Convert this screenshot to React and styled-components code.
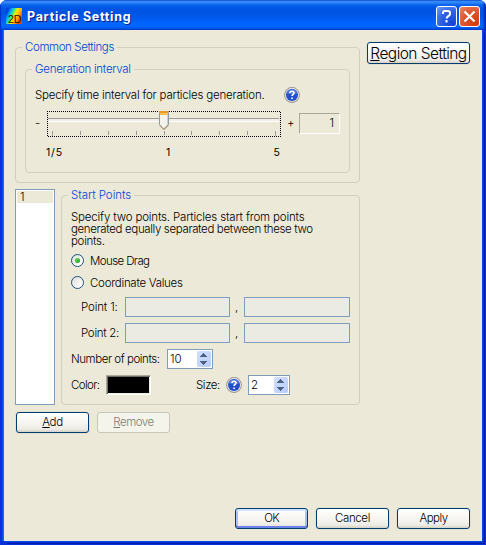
import React from 'react';
import styled, { createGlobalStyle, css } from 'styled-components';

const face = '#ece9d8';
const groove = '#d0d0bf';
const fieldBorder = '#7f9db9';

const GlobalStyle = createGlobalStyle`
  *, *::before, *::after { box-sizing: border-box; }
  html, body { margin: 0; padding: 0; background: #fff; }
  body { font-family: Inter, "Liberation Sans", sans-serif; font-size: 11.5px; font-weight: 350; line-height: 12px; color: #000; }
`;

const Window = styled.div`
  width: 486px;
  height: 545px;
  display: flex;
  flex-direction: column;
  border-radius: 7px 7px 0 0;
  overflow: hidden;
  background: #0831d9;
`;

const TitleBar = styled.header`
  height: 30px;
  flex: none;
  display: flex;
  align-items: flex-start;
  padding: 6px 6px 0;
  background: linear-gradient(180deg, #0a4fd0 0, #3d95ff 1px, #2a80f5 3px, #0863ee 5px, #0055e5 8px, #0054e3 13px, #005cf0 19px, #0066ff 24px, #0068ff 26px, #005bf0 28px, #0043cf 30px);
  box-shadow: inset 1px 0 #0030c8, inset -2px 0 2px #0028b0;
`;

const AppIcon = styled.svg`
  display: block;
  flex: none;
  margin-top: 2px;
`;

const Title = styled.h1`
  margin: 3px 0 0 5px;
  flex: 1;
  font-size: 12.5px;
  line-height: 16px;
  font-weight: 700;
  letter-spacing: ${(p) => p.$ls}px;
  color: #fff;
  text-shadow: 1px 1px #0a1883;
  white-space: nowrap;
`;

const CaptionButton = styled.button`
  width: 21px;
  height: 21px;
  padding: 0;
  margin-left: 2px;
  flex: none;
  display: flex;
  align-items: center;
  justify-content: center;
  border: 1px solid #fff;
  border-radius: 3px;
  background: ${(p) =>
    p.$close
      ? 'radial-gradient(circle at 80% 85%, #d23c0c, #e1552f 55%, #eb9174 110%)'
      : 'radial-gradient(circle at 80% 85%, #1444d8, #2f63e6 55%, #84a6f5 110%)'};
`;

const Client = styled.main`
  flex: 1;
  margin: 0 4px 4px;
  padding: 12px 12px 12px 11px;
  display: flex;
  flex-direction: column;
  background: ${face};
  box-shadow: -1px 0 #1566f5, -2px 0 #0a50ee, 1px 0 #0148ee, 0 1px #0148ee, 2px 2px #0030d0, 3px 3px #001ca8;
`;

const Text = styled.span`
  white-space: nowrap;
  flex: none;
  line-height: 12px;
  letter-spacing: ${(p) => p.$ls || 0}px;
  ${(p) => p.$w && css`width: ${p.$w}px;`}
`;

const Sign = styled.span`
  flex: none;
  width: ${(p) => p.$w}px;
  padding-bottom: 3px;
  line-height: 12px;
`;

const TopRow = styled.div`
  display: flex;
  justify-content: space-between;
  align-items: flex-start;
`;

const Group = styled.section`
  border: 1px solid ${groove};
  border-radius: 4px;
  width: ${(p) => p.$w}px;
  height: ${(p) => p.$h}px;
  margin-top: ${(p) => p.$mt || 0}px;
  padding: 0 9px;
`;

const Legend = styled.h2`
  width: fit-content;
  margin: -8px 0 0 -3px;
  padding: 0 3px;
  font-size: 11.5px;
  line-height: 15px;
  font-weight: 350;
  white-space: nowrap;
  letter-spacing: ${(p) => p.$ls || 0}px;
  color: #0046d5;
  background: ${face};
`;

const Row = styled.div`
  display: flex;
  align-items: center;
  height: ${(p) => p.$h}px;
  margin-top: ${(p) => p.$mt || 0}px;
  padding-left: ${(p) => p.$pl || 0}px;
`;

const HelpGlyph = styled.svg`
  display: block;
  flex: none;
`;

const SliderRow = styled.div`
  display: flex;
  align-items: center;
  margin-top: 8px;
`;

const Slider = styled.svg`
  display: block;
  flex: none;
  margin: 0 6px;
`;

const ValueBox = styled.output`
  width: 41px;
  height: 21px;
  margin: -2px 0 0 5px;
  padding-right: 5px;
  border: 1px solid;
  border-color: #aca899 #fff #fff #aca899;
  line-height: 18px;
  text-align: right;
`;

const ScaleLabels = styled.div`
  display: flex;
  justify-content: space-between;
  width: 234px;
  margin: 9px 0 0 11px;
  line-height: 13px;
  font-size: 10.5px;
  font-weight: 400;
  & > :first-child { letter-spacing: 0.8px; }
`;

const BodyRow = styled.div`
  display: flex;
  gap: 6px;
  margin-top: 6px;
`;

const ListBox = styled.ul`
  width: 40px;
  height: 216px;
  margin: 0;
  padding: 1px;
  list-style: none;
  border: 1px solid ${fieldBorder};
  background: #fff;
`;

const ListItem = styled.li`
  height: 12px;
  line-height: 13px;
  padding-left: 3px;
  background: ${face};
`;

const Paragraph = styled.p`
  margin: 8px 0 0;
  line-height: 12px;
  white-space: nowrap;
`;

const Line = styled.span`
  display: block;
  letter-spacing: ${(p) => p.$ls}px;
`;

const Radio = styled.span`
  width: 13px;
  height: 13px;
  flex: none;
  margin-right: 6px;
  display: flex;
  align-items: center;
  justify-content: center;
  border: 1px solid #1c5180;
  border-radius: 50%;
  background: linear-gradient(135deg, #dcdcd7, #fff 80%);
  &::after {
    content: '';
    display: ${(p) => (p.$checked ? 'block' : 'none')};
    width: 5px;
    height: 5px;
    border-radius: 50%;
    background: radial-gradient(circle at 35% 35%, #55d551, #1a9a18);
  }
`;

const DisabledField = styled.div`
  width: ${(p) => p.$w}px;
  height: 20px;
  flex: none;
  border: 1px solid ${fieldBorder};
  background: #ebebe4;
`;

const Comma = styled.span`
  width: 14px;
  flex: none;
  padding-left: 5px;
`;

const SpinBox = styled.div`
  width: ${(p) => p.$w}px;
  height: 20px;
  flex: none;
  margin-left: ${(p) => p.$ml}px;
  padding: 1px 1px 1px 2px;
  display: flex;
  justify-content: space-between;
  border: 1px solid ${fieldBorder};
  background: #fff;
  line-height: 17px;
`;

const SpinButtons = styled.span`
  width: 14px;
  height: 16px;
  display: flex;
  flex-direction: column;
  border-radius: 2px;
  background: linear-gradient(135deg, #d3e0fd, #b6cbf9);
`;

const Swatch = styled.div`
  width: 45px;
  height: 20px;
  flex: none;
  background: #000;
  border: 1px solid;
  border-color: #aca899 #fff #fff #aca899;
  box-shadow: inset 1px 1px #716f64, inset -1px -1px #f1efe2;
`;

const Button = styled.button`
  width: ${(p) => p.$w || 73}px;
  height: ${(p) => p.$h || 21}px;
  flex: none;
  padding: 0;
  font-family: inherit;
  font-weight: ${(p) => (p.$fs ? 300 : 350)};
  font-size: ${(p) => p.$fs || 11.5}px;
  line-height: 17px;
  letter-spacing: ${(p) => p.$ls || 0}px;
  white-space: nowrap;
  color: #000;
  border: 1px solid #003c74;
  border-radius: 3px;
  background: linear-gradient(#fff, #f4f3ee 60%, #ecebe5 85%, #d6d0c5);
  box-shadow: 0 0 0 1px #e4e0cd;
  ${(p) => p.$default && css`box-shadow: inset 0 2px #cee7ff, inset 0 -2px #6982ee, inset 2px 0 #a9c1f3, inset -2px 0 #a9c1f3;`}
  &:disabled {
    color: #7d7c70;
    border-color: #c9c7ba;
    background: #f5f4ea;
    box-shadow: none;
  }
`;

const Mnemonic = styled.span`
  text-decoration: underline;
  text-decoration-thickness: 1px;
  text-underline-offset: 1px;
  text-decoration-skip-ink: none;
`;

const ListActions = styled.div`
  display: flex;
  gap: 8px;
  margin: 7px 0 0 1px;
`;

const Footer = styled.footer`
  display: flex;
  justify-content: flex-end;
  gap: 8px;
  margin-top: auto;
`;

function HelpIcon() {
  return (
    <HelpGlyph width="16" height="16" viewBox="0 0 16 16">
      <circle cx="8" cy="8" r="7.9" fill="#8f8e8a" />
      <circle cx="8" cy="7.9" r="7.1" fill="#dedede" />
      <circle cx="8" cy="8" r="6" fill="#2450cc" />
      <path d="M2.6 6.3a5.7 5.7 0 0 1 10.8 0Q8 8.3 2.6 6.3Z" fill="#4f79df" />
      <path d="M5.9 6.1C5.9 3.5 10 3.6 10 6c0 1.4-1.9 1.5-1.9 3.1M8.1 10.4v1.7" stroke="#fff" strokeWidth="1.6" fill="none" />
    </HelpGlyph>
  );
}

function Arrows() {
  return (
    <SpinButtons>
      <svg width="14" height="16" viewBox="0 0 14 16" shapeRendering="crispEdges">
        <path d="M0 8h14" stroke="#c6d7fc" />
        <path d="M6 2h1v1h1v1h1v1h1v1H3V5h1V4h1V3h1zM3 10h7v1H9v1H8v1H7v1H6v-1H5v-1H4v-1H3z" fill="#4d6185" />
      </svg>
    </SpinButtons>
  );
}

const ticks = [5, 33, 61, 89, 117, 144, 172, 200, 228];

function IntervalSlider() {
  return (
    <Slider width="234" height="26" viewBox="0 0 234 26">
      <rect x="0.5" y="0.5" width="233" height="25" fill="none" stroke="#000" strokeDasharray="1 1" strokeDashoffset="0.5" shapeRendering="crispEdges" />
      <path d="M1 7.5h231" stroke="#9d9c99" />
      <path d="M1 8.5h231M1 9.5h231" stroke="#f0eee5" />
      <path d="M1 10.5h231" stroke="#fff" />
      {ticks.map((x, i) => (
        <path key={x} d={`M${x + 0.5} 20v${i === 0 || i === 8 ? 5 : 4}`} stroke="#9d9c99" />
      ))}
      <path d="M112.5 1.5h9v12l-4.5 5-4.5-5z" fill="#f4f3ee" stroke="#8d9aa6" />
      <path d="M112 .5h10M113 1.5h8" stroke="#e59a2a" />
      <path d="M113 2.5h8M113 3.5h8" stroke="#ffc14e" />
      <path d="M120.5 4v9.5l-3.5 4" stroke="#d1cfc5" fill="none" />
      <path d="M112.5 14l4.5 4.5 4.5-4.5" stroke="#a58a58" fill="none" />
    </Slider>
  );
}

export default function App() {
  return (
    <>
      <GlobalStyle />
      <Window>
        <TitleBar>
          <AppIcon width="16" height="16" viewBox="0 0 16 16">
            <defs>
              <linearGradient id="spectrum" x1="0" y1="0" x2="1" y2="0.5">
                <stop offset="0.15" stopColor="#0040e0" />
                <stop offset="0.32" stopColor="#00b0f8" />
                <stop offset="0.46" stopColor="#32e890" />
                <stop offset="0.6" stopColor="#f4f000" />
                <stop offset="0.8" stopColor="#ffb000" />
                <stop offset="1" stopColor="#f04000" />
              </linearGradient>
            </defs>
            <rect width="16" height="16" fill="url(#spectrum)" />
            <text x="2" y="15" fontFamily="Liberation Sans, sans-serif" fontSize="11.5" fontWeight="400" textLength="13.5" lengthAdjust="spacingAndGlyphs" fill="#201800">2D</text>
          </AppIcon>
          <Title $ls={0.7}>Particle Setting</Title>
          <CaptionButton aria-label="Help">
            <svg width="19" height="19" viewBox="0 0 19 19">
              <path d="M6 7V5.5Q6.200 4 8 4h3q2 .1 2 2v1q0 1.200-1.500 2T9.500 11.500M9.500 13v2.500" fill="none" stroke="#fff" strokeWidth="2" />
            </svg>
          </CaptionButton>
          <CaptionButton $close aria-label="Close">
            <svg width="19" height="19" viewBox="0 0 19 19">
              <path d="M4.5 4.5l10 10M14.5 4.5l-10 10" stroke="#fff" strokeWidth="2.2" />
            </svg>
          </CaptionButton>
        </TitleBar>
        <Client>
          <TopRow>
            <Group $w={345} $h={136} $mt={5}>
              <Legend $ls={-0.4}>Common Settings</Legend>
              <Group $w={325} $h={104} $mt={14}>
                <Legend $ls={-0.28}>Generation interval</Legend>
                <Row $h={16} $mt={10}>
                  <Text $w={249} $ls={-0.2}>Specify time interval for particles generation.</Text>
                  <HelpIcon />
                </Row>
                <SliderRow>
                  <Sign $w={6}>-</Sign>
                  <IntervalSlider />
                  <Sign $w={7}>+</Sign>
                  <ValueBox>1</ValueBox>
                </SliderRow>
                <ScaleLabels>
                  <span>1/5</span>
                  <span>1</span>
                  <span>5</span>
                </ScaleLabels>
              </Group>
            </Group>
            <Button $w={103} $h={22} $fs={15.5} $ls={-0.55}><Mnemonic>R</Mnemonic>egion Setting</Button>
          </TopRow>
          <BodyRow>
            <ListBox><ListItem>1</ListItem></ListBox>
            <Group $w={299} $h={210} $mt={6}>
              <Legend $ls={-0.05}>Start Points</Legend>
              <Paragraph>
                <Line $ls={-0.17}>Specify two points. Particles start from points</Line>
                <Line $ls={-0.36}>generated equally separated between these two</Line>
                <Line $ls={-0.3}>points.</Line>
              </Paragraph>
              <Row $h={13} $mt={7}><Radio $checked /><Text $ls={-0.6}>Mouse Drag</Text></Row>
              <Row $h={13} $mt={9}><Radio /><Text $ls={-0.28}>Coordinate Values</Text></Row>
              <Row $h={20} $mt={8} $pl={10}>
                <Text $w={44} $ls={-0.15}>Point 1:</Text><DisabledField $w={105} /><Comma>,</Comma><DisabledField $w={106} />
              </Row>
              <Row $h={20} $mt={6} $pl={10}>
                <Text $w={44} $ls={-0.3}>Point 2:</Text><DisabledField $w={105} /><Comma>,</Comma><DisabledField $w={106} />
              </Row>
              <Row $h={20} $mt={6}>
                <Text $w={96} $ls={-0.45}>Number of points:</Text><SpinBox $w={46} $ml={0}>10<Arrows /></SpinBox>
              </Row>
              <Row $h={20} $mt={6}>
                <Text $w={35} $ls={-0.6}>Color:</Text><Swatch />
                <Row $h={20} $pl={45}><Text $w={30} $ls={-0.4}>Size:</Text></Row>
                <HelpIcon />
                <SpinBox $w={42} $ml={6}>2<Arrows /></SpinBox>
              </Row>
            </Group>
          </BodyRow>
          <ListActions>
            <Button $ls={-0.4}><Mnemonic>A</Mnemonic>dd</Button>
            <Button disabled $ls={-0.5}><Mnemonic>R</Mnemonic>emove</Button>
          </ListActions>
          <Footer>
            <Button $default $ls={-0.8}>OK</Button>
            <Button $ls={-0.4}>Cancel</Button>
            <Button $ls={-0.5}>Apply</Button>
          </Footer>
        </Client>
      </Window>
    </>
  );
}
